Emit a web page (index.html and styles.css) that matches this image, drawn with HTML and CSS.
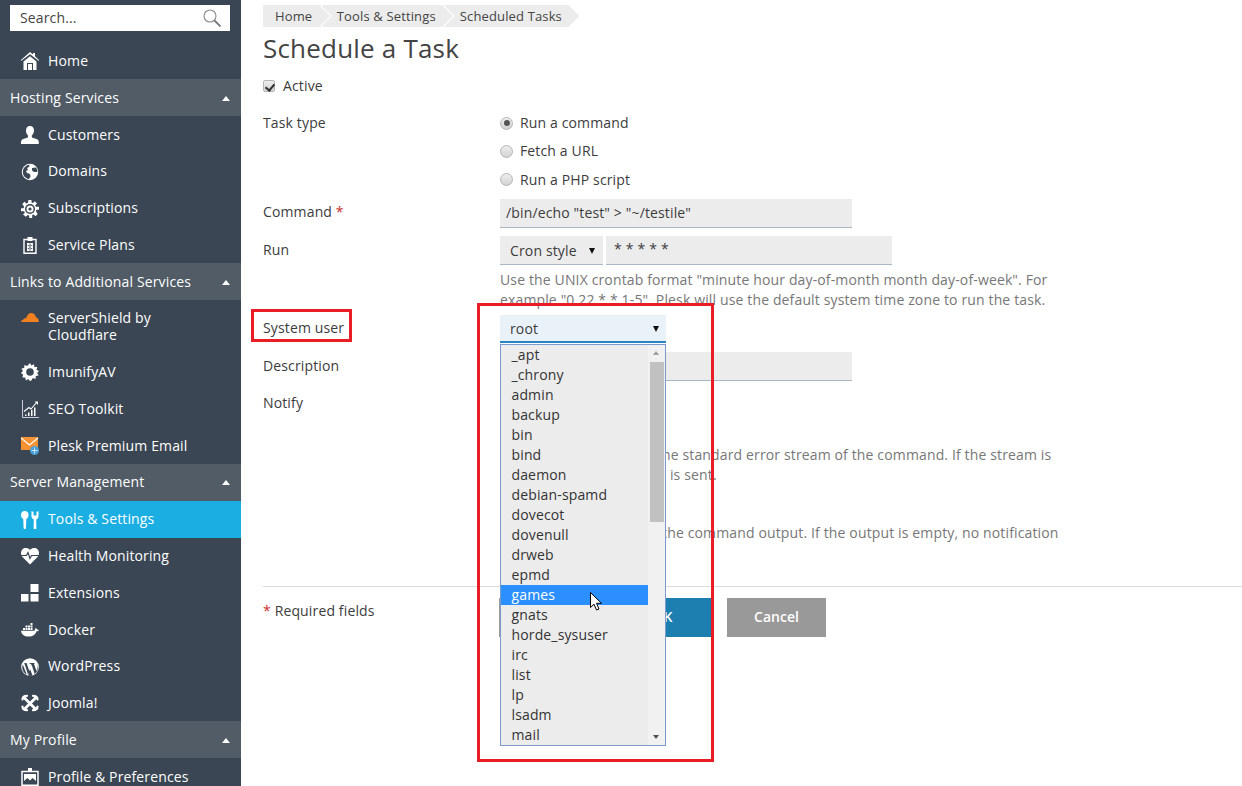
FILE: index.html
```html
<!DOCTYPE html>
<html lang="en">
<head>
<meta charset="utf-8">
<title>Schedule a Task</title>
<link rel="stylesheet" href="styles.css">
</head>
<body>
<div class="app">
  <aside class="sidebar">
    <div class="search">
      <span>Search...</span>
      <svg class="search-icon" viewBox="0 0 18 18"><circle cx="7" cy="7" r="6" fill="none" stroke="#8a8a8a" stroke-width="1.1"/><path d="M11.500 11.500l6 6" stroke="#777" stroke-width="1.800"/></svg>
    </div>
    <nav>
      <a class="item"><svg viewBox="0 0 18 18"><path fill="#fff" d="M9 0l3 2.600V1h2v3.300L18 8v1L9 2.200 0 9V8zM2.500 9.500L9 4.200l6.500 5.300V18H12v-7H6v7H2.500zM7 12h4v6H7z"/></svg>Home</a>
      <div class="section">Hosting Services<i class="caret"></i></div>
      <a class="item"><svg viewBox="0 0 18 18"><path fill="#fff" d="M9 0c2.600 0 4 2 4 4.600 0 2-.9 3.900-2.200 4.800v1.300c0 1 2 1.400 4 2.100 2 .7 3 1.600 3 3.200v2H0v-2c0-1.600 1-2.500 3-3.200 2-.7 4-1.100 4-2.100V9.400C5.700 8.500 5 6.600 5 4.600 5 2 6.400 0 9 0z"/></svg>Customers</a>
      <a class="item"><svg viewBox="0 0 18 18"><circle cx="9" cy="9" r="8.200" fill="#fff"/><path fill="#3a4653" d="M3 5c1.500-2 3-3 5.500-3.200L8 4 6 5l1 2-2 1 1 2 3 1 .5 2.500L8 16C4 15.500 1.800 12 1.900 9 2 7.500 2.300 6 3 5zM11 5l4-.5c1.200 1.500 1.500 3 1.300 4.500L13 9l-2-1.500z"/></svg>Domains</a>
      <a class="item"><svg viewBox="0 0 18 18"><path fill="#fff" d="M7.500 0h3v2.500l1.500.6L13.800 1.300 16 3.500l-1.800 1.800.6 1.500H18v3h-2.500l-.6 1.500L16.700 14 14.500 16.200l-1.800-1.800-1.500.6V18h-3v-2.500l-1.500-.6-1.800 1.800L2 14.500l1.800-1.800-.6-1.500H0v-3h2.500l.6-1.500L1.300 4 3.500 1.800l1.800 1.800 1.500-.6z"/><circle cx="9" cy="9" r="5" fill="#3a4653"/><circle cx="9" cy="9" r="3.500" fill="#fff"/><circle cx="9" cy="9" r="1.600" fill="#3a4653"/></svg>Subscriptions</a>
      <a class="item"><svg viewBox="0 0 18 18"><path fill="none" stroke="#fff" stroke-width="1.400" d="M3 3.500h12v13.800H3z"/><path fill="#fff" d="M6.500 1h5v4h-5zM6 7h6v8H6z"/><path fill="#3a4653" d="M8.500 7.500h1v7h-1zM6.800 9h1v1h-1zM10.200 9h1v1h-1zM6.800 12h1v1h-1zM10.200 12h1v1h-1z"/></svg>Service Plans</a>
      <div class="section">Links to Additional Services<i class="caret"></i></div>
      <a class="item"><svg viewBox="0 0 18 18"><path fill="#f38020" d="M0 13c0-1.200 1-2 2-2 .5-1.800 2.200-2.200 3-1.600C6 6 8 4 10 4c2.700 0 4.700 2 5 4.500 1.500-.2 2.700 1.200 3 4.500z"/></svg><span class="label">ServerShield by Cloudflare</span></a>
      <a class="item"><svg viewBox="0 0 18 18"><path fill="#fff" d="M9 0l1.300 2.500L13 1.200l.4 2.900 2.900-.1-.8 2.800L18 8l-1.900 2.100 1.500 2.400-2.800.6-.2 2.900-2.700-1L10.300 17.500 9 18l-1.800-2.100-2.300 1.500-.7-2.800-2.900-.2.900-2.700L0 10l1.900-1.900L.4 5.600l2.800-.7.200-2.900 2.700.9z"/><circle cx="9" cy="9" r="3.800" fill="#3a4653"/></svg>ImunifyAV</a>
      <a class="item"><svg viewBox="0 0 18 18"><path fill="none" stroke="#ccd" stroke-width="1" d="M1.500 0v17.500H18"/><path fill="#fff" d="M4 14.500h1.500V16H4zM7 12.500h1.500V16H7zM10 10h1.500v6H10zM13 7.500h1.500V16H13z"/><path fill="none" stroke="#fff" stroke-width="1.100" d="M3 11.500l5-4 2 1.500 6-7"/><path fill="#fff" d="M13.500 1.500H17V5z"/></svg>SEO Toolkit</a>
      <a class="item"><svg viewBox="0 0 18 18"><path fill="#f79232" d="M0 0h17v13H0z"/><path fill="none" stroke="#fff" stroke-width="1.200" d="M0 1l8.500 7L17 1"/><circle cx="13.500" cy="13.500" r="4.500" fill="#4a9fd8"/><path fill="none" stroke="#d8eefc" stroke-width=".9" d="M10.500 13.500h6M13.500 10.500v6"/></svg>Plesk Premium Email</a>
      <div class="section">Server Management<i class="caret"></i></div>
      <a class="item active"><svg viewBox="0 0 18 18"><path fill="#fff" d="M3.800 0C6 0 7.500 1.500 7.500 4c0 2-1 3.500-2.200 4l-.3 9a1.200 1.200 0 0 1-2.400 0L2.300 8C1 7.500 0 6 0 4c0-2.500 1.500-4 3.800-4z"/><path fill="#fff" d="M10.500 0v5c0 2 1 3 2.300 3.500L12.600 17a1.400 1.400 0 0 0 2.800 0L15.200 8.500C16.500 8 17.500 7 17.500 5V0L15.500 1v3.500h-3V1z"/></svg>Tools &amp; Settings</a>
      <a class="item"><svg viewBox="0 0 18 18"><path fill="#fff" d="M9 17.500L1.500 10C-.5 8-.5 4.500 1.300 2.500 3.300.5 6.800.5 9 3c2.200-2.500 5.700-2.500 7.700-.5 1.800 2 1.800 5.500-.2 7.500z"/><path fill="none" stroke="#3a4653" stroke-width="1.200" d="M0 8.500h5.500L7 5.500l2 6 1.500-3H18"/></svg>Health Monitoring</a>
      <a class="item"><svg viewBox="0 0 18 18"><path fill="#fff" d="M0 10h7.500v7.500H0zM9.500 10H17.500v7.500H9.500zM9.500 0H17.500v8H9.500z"/></svg>Extensions</a>
      <a class="item"><svg viewBox="0 0 18 18"><path fill="#fff" d="M2 7h2v2H2zM4.500 7h2v2h-2zM7 7h2v2H7zM9.500 7h2v2h-2zM4.500 4.500h2v2h-2zM7 4.500h2v2H7zM9.500 4.500h2v2h-2zM9.500 2h2v2h-2zM0 9.700h13.500c.3-1.500 1-2.500 1.500-2.700.5.500 1 1 1 1.500.7-.2 1.500 0 2 .5-.5 1-1.500 1.200-2.500 1.200C14.500 13.500 11.500 15.500 8 15.500c-5 0-7.500-2-8-5.800z"/></svg>Docker</a>
      <a class="item"><svg viewBox="0 0 18 18"><circle cx="9" cy="9" r="8.800" fill="#fff"/><path fill="#3a4653" d="M1.800 6.500L5.700 16.500C3 15.500 0 11 1.800 6.500zM4 5h1.500l3 8.500L7 16.500 3.800 6.500 3 5.800zM8 5h5.500v.8L13 6l2.500 7 1-3.500c.5-2-.2-3.400-.6-4.500 1.800 3.300 1.500 7.800-2.200 11L11 8 10 6H9.500zM9 11l2.500 6.500c-1.500.5-3 .5-4.300 0z"/></svg>WordPress</a>
      <a class="item"><svg viewBox="0 0 18 18"><g fill="none" stroke="#fff" stroke-linecap="round"><path stroke-width="2.800" d="M3.500 4l10.500 10.500M14.500 4L4 14.500"/><path stroke-width="2.200" d="M6 1.800C4 1.800 1.500 2.500 1.500 5.500M12 16.200c2 0 4.500-.7 4.500-3.700M16.500 5.500c0-3-2.500-3.700-4.500-3.700M1.500 12.500c0 3 2.500 3.700 4.500 3.700"/></g></svg>Joomla!</a>
      <div class="section">My Profile<i class="caret"></i></div>
      <a class="item"><svg viewBox="0 0 18 18"><path fill="none" stroke="#fff" stroke-width="1.500" d="M1 3.500h16v13.700H1z"/><path fill="#fff" d="M7 0h4v3.500H7zM3 6h12v7l-3.500-3L9 12.500 6.500 10 3 13z"/></svg>Profile &amp; Preferences</a>
    </nav>
  </aside>

  <main class="main">
    <div class="crumbs">
      <span class="crumb first">Home</span>
      <span class="crumb">Tools &amp; Settings</span>
      <span class="crumb">Scheduled Tasks</span>
    </div>
    <h1>Schedule a Task</h1>
    <label class="active-row"><span class="check"></span>Active</label>

    <div class="row task-row">
      <div class="name">Task type</div>
      <div class="options">
        <div class="opt"><span class="radio on"></span>Run a command</div>
        <div class="opt"><span class="radio"></span>Fetch a URL</div>
        <div class="opt"><span class="radio"></span>Run a PHP script</div>
      </div>
    </div>

    <div class="row command-row">
      <div class="name pad3">Command <em>*</em></div>
      <div class="field wide">/bin/echo "test" &gt; "~/testile"</div>
    </div>

    <div class="row run-row">
      <div class="name pad4">Run</div>
      <div>
        <div class="run-controls">
          <div class="field select cron">Cron style<i class="arrow"></i></div>
          <div class="field cron-input">* * * * *</div>
        </div>
        <p class="hint">Use the UNIX crontab format "minute hour day-of-month month day-of-week". For example "0 22 * * 1-5". Plesk will use the default system time zone to run the task.</p>
      </div>
    </div>

    <div class="row user-row">
      <div class="name pad3">System user</div>
      <div class="field select user">root<i class="arrow"></i></div>
    </div>

    <div class="row desc-row">
      <div class="name pad4">Description</div>
      <div class="field wide"></div>
    </div>

    <div class="row notify-row">
      <div class="name">Notify</div>
      <div class="options notify">
        <div class="opt"><span class="radio on"></span>Do not notify</div>
        <div class="opt"><span class="radio"></span>Errors only</div>
        <p class="hint sub">Mail the text sent to the standard error stream of the command. If the stream is empty, no notification is sent.</p>
        <div class="opt"><span class="radio"></span>Every time</div>
        <p class="hint sub">Mail the whole log of the command output. If the output is empty, no notification is sent.</p>
      </div>
    </div>

    <div class="footer">
      <div class="required"><em>*</em> Required fields</div>
      <div class="buttons">
        <button class="btn grey">Run Now</button>
        <button class="btn blue">OK</button>
        <button class="btn grey">Cancel</button>
      </div>
    </div>
  </main>
</div>

<div class="mark mark-label"></div>
<div class="mark mark-list"></div>

<div class="listbox">
  <div class="list-items">
    <div>_apt</div><div>_chrony</div><div>admin</div><div>backup</div><div>bin</div><div>bind</div><div>daemon</div><div>debian-spamd</div><div>dovecot</div><div>dovenull</div><div>drweb</div><div>epmd</div><div class="picked">games</div><div>gnats</div><div>horde_sysuser</div><div>irc</div><div>list</div><div>lp</div><div>lsadm</div><div>mail</div>
  </div>
  <div class="scroll">
    <i class="up"></i>
    <i class="thumb"></i>
    <i class="down"></i>
  </div>
</div>
<svg class="cursor" viewBox="0 0 13 20"><path fill="#fff" stroke="#000" stroke-width="1" d="M.5.500v15l3.500-3.300 2.500 5.800 2.500-1-2.500-5.700h5z"/></svg>
</body>
</html>
```

FILE: styles.css
```css
* { box-sizing: border-box; }
html, body { margin: 0; height: 786px; overflow: hidden; background: #fff; }
body { font: 14px/20px "Open Sans", sans-serif; letter-spacing: .14px; color: #3c3c3c; position: relative; }
.app { display: flex; height: 786px; }

.sidebar { width: 241px; flex: none; height: 786px; overflow: hidden; background: #3a4653; color: #fff; padding-top: 5px; }
.search { display: flex; align-items: center; justify-content: space-between; height: 26px; margin: 0 11px 11.600px 10px; padding: 0 9px 0 10px; background: #fff; color: #444; }
.search-icon { width: 18px; height: 18px; }
.item, .section { display: flex; line-height: 16.800px; padding-top: 10.400px; padding-bottom: 9.600px; }
.item { padding-left: 21px; align-items: center; gap: 9px; padding-right: 40px; }
.item svg { width: 18px; height: 18px; flex: none; margin: -1px 0; }
.item .label { display: block; }
.item:has(.label) { align-items: flex-start; }
.section { background: #515c66; padding-left: 10px; padding-right: 11px; justify-content: space-between; align-items: center; }
.caret { width: 0; height: 0; border: 4.500px solid transparent; border-top: 0; border-bottom: 5px solid #fff; }
.active { background: #1aaee3; }

.main { flex: 1; padding: 5px 0 0 22px; min-width: 0; }
.crumbs { display: flex; height: 22px; font-size: 13px; line-height: 22px; color: #444; letter-spacing: .14px; }
.crumb { background: #ececec; padding: 0 17.500px 0 16px; margin-left: -9.500px; clip-path: polygon(0 0, calc(100% - 11px) 0, 100% 50%, calc(100% - 11px) 100%, 0 100%, 11px 50%); }
.crumb.first { margin-left: 0; padding: 0 18px 0 12px; clip-path: polygon(0 0, calc(100% - 11px) 0, 100% 50%, calc(100% - 11px) 100%, 0 100%); }
h1 { margin: 3px 0 10px; font-size: 26px; font-weight: 400; line-height: 36px; letter-spacing: .2px; color: #444; }
.active-row { display: flex; align-items: center; height: 20px; }
.check { width: 12px; height: 12px; margin-right: 8px; border: 1px solid #b5b5b5; border-radius: 2px; background: linear-gradient(#eee, #d2d2d2); position: relative; }
.check::after { content: ""; position: absolute; left: 3px; top: 1px; width: 4px; height: 7px; border: solid #333; border-width: 0 2px 2px 0; transform: rotate(40deg); }

.row { display: grid; grid-template-columns: 237px 1fr; }
.task-row { margin-top: 17px; }
.command-row { margin-top: 9.500px; }
.run-row { margin-top: 8px; }
.user-row { margin-top: 5.800px; }
.desc-row { margin-top: 9px; }
.notify-row { margin-top: 12px; }
.pad3 { padding-top: 3px; }
.pad4 { padding-top: 4px; }
em { font-style: normal; color: #c9302c; }
.options { display: flex; flex-direction: column; gap: 8.250px; }
.opt { display: flex; align-items: center; height: 20px; }
.radio { width: 13px; height: 13px; margin-right: 7px; border: 1px solid #b5b5b5; border-radius: 50%; background: linear-gradient(#eee, #d2d2d2); position: relative; }
.radio.on::after { content: ""; position: absolute; left: 2.500px; top: 2.500px; width: 6px; height: 6px; border-radius: 50%; background: #555; }
.field { background: #ececec; border-bottom: 1px solid #a9b8c6; padding: 0 6px; display: flex; align-items: center; }
.wide { width: 352px; height: 29px; }
.run-controls { display: flex; gap: 3px; }
.select { justify-content: space-between; height: 29px; padding-left: 10px; }
.cron { width: 103px; padding-right: 8px; padding-top: 2px; }
.cron-input { width: 286px; height: 29px; padding: 0 8px 3px; letter-spacing: .2px; }
.arrow { width: 0; height: 0; border: 3.500px solid transparent; border-bottom: 0; border-top: 6px solid #111; }
.hint { margin: 5px 0 0; width: 560px; line-height: 19.600px; color: #777; }
.user { width: 166px; height: 28px; background: #eaf2f9; border-bottom: 2px solid #2a86c0; padding-right: 7px; padding-top: 2px; }
.notify { gap: 8px; }
.hint.sub { margin: -4px 0 7px 20px; width: 545px; }

.footer { display: flex; margin-top: 17px; border-top: 1px solid #ddd; padding-top: 11px; }
.required { width: 236px; padding-top: 3px; }
.buttons { display: flex; gap: 15px; }
.btn { width: 99px; height: 39px; border: 0; padding: 0 0 2px; color: #fff; font: 600 14px "Open Sans", sans-serif; }
.btn.blue { background: #1c7fb0; }
.btn.grey { background: #999; }

.mark { position: absolute; border: 3px solid #e81d25; }
.mark-label { left: 251px; top: 309px; width: 101px; height: 33px; }
.mark-list { left: 477px; top: 303px; width: 237px; height: 459px; }

.listbox { position: absolute; left: 500px; top: 344px; width: 166px; height: 402px; display: flex; background: #ececec; border: 1px solid #7b9bd0; }
.list-items { flex: 1; }
.list-items div { height: 20px; line-height: 20px; padding-left: 10.500px; color: #333; }
.list-items .picked { background: #2b8fff; color: #fff; }
.scroll { width: 17px; background: #f1f1f1; position: relative; flex: none; }
.thumb { position: absolute; left: 2px; right: 1px; top: 17px; height: 160px; background: #c1c1c1; }
.up, .down { position: absolute; left: 5px; width: 0; height: 0; border: 3.500px solid transparent; }
.up { top: 6px; border-top: 0; border-bottom: 4px solid #a0a0a0; }
.down { bottom: 6px; border-bottom: 0; border-top: 4px solid #505050; }
.cursor { position: absolute; left: 590px; top: 592px; width: 13px; height: 20px; }
```
